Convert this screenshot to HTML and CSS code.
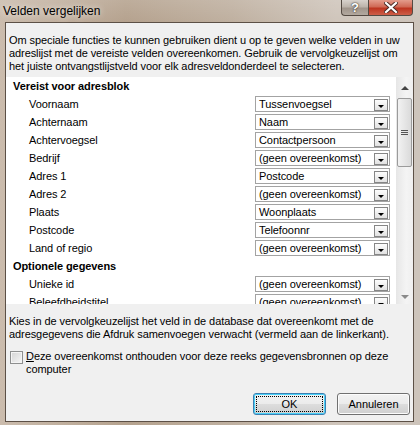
FILE: index.html
```html
<!DOCTYPE html>
<html lang="nl">
<head>
    <meta charset="UTF-8">
    <title>Velden vergelijken</title>
    <link rel="stylesheet" href="styles.css">
</head>
<body>
    <div class="window">
        <div class="titlebar">
            <span class="title">Velden vergelijken</span>
            <div class="caption-buttons">
                <span class="cap help">?</span>
                <span class="cap close">
                    <svg width="14" height="11" viewBox="0 0 14 11">
                        <path d="M2 1 L12 10 M12 1 L2 10" stroke="#4a2a24" stroke-width="4" stroke-linecap="square"/>
                        <path d="M2 1 L12 10 M12 1 L2 10" stroke="#fff" stroke-width="2.2" stroke-linecap="square"/>
                    </svg>
                </span>
            </div>
        </div>
        <div class="client">
            <p class="intro">Om speciale functies te kunnen gebruiken dient u op te geven welke velden in uw adreslijst met de vereiste velden overeenkomen. Gebruik de vervolgkeuzelijst om het juiste ontvangstlijstveld voor elk adresveldonderdeel te selecteren.</p>

            <div class="listbox">
                <div class="rows">
                    <div class="row head">Vereist voor adresblok</div>
                    <div class="row"><span class="label">Voornaam</span><div class="combo"><span class="value">Tussenvoegsel</span><span class="drop"></span></div></div>
                    <div class="row"><span class="label">Achternaam</span><div class="combo"><span class="value">Naam</span><span class="drop"></span></div></div>
                    <div class="row"><span class="label">Achtervoegsel</span><div class="combo"><span class="value">Contactpersoon</span><span class="drop"></span></div></div>
                    <div class="row"><span class="label">Bedrijf</span><div class="combo"><span class="value">(geen overeenkomst)</span><span class="drop"></span></div></div>
                    <div class="row"><span class="label">Adres 1</span><div class="combo"><span class="value">Postcode</span><span class="drop"></span></div></div>
                    <div class="row"><span class="label">Adres 2</span><div class="combo"><span class="value">(geen overeenkomst)</span><span class="drop"></span></div></div>
                    <div class="row"><span class="label">Plaats</span><div class="combo"><span class="value">Woonplaats</span><span class="drop"></span></div></div>
                    <div class="row"><span class="label">Postcode</span><div class="combo"><span class="value">Telefoonnr</span><span class="drop"></span></div></div>
                    <div class="row"><span class="label">Land of regio</span><div class="combo"><span class="value">(geen overeenkomst)</span><span class="drop"></span></div></div>
                    <div class="row head">Optionele gegevens</div>
                    <div class="row"><span class="label">Unieke id</span><div class="combo"><span class="value">(geen overeenkomst)</span><span class="drop"></span></div></div>
                    <div class="row"><span class="label">Beleefdheidstitel</span><div class="combo"><span class="value">(geen overeenkomst)</span><span class="drop"></span></div></div>
                </div>
                <div class="scrollbar">
                    <span class="arrow up"></span>
                    <span class="thumb"><span class="grip"></span></span>
                    <span class="arrow down"></span>
                </div>
            </div>

            <p class="hint">Kies in de vervolgkeuzelijst het veld in de database dat overeenkomt met de adresgegevens die Afdruk samenvoegen verwacht (vermeld aan de linkerkant).</p>

            <label class="remember">
                <span class="checkbox"></span>
                <span class="remember-text"><u>D</u>eze overeenkomst onthouden voor deze reeks gegevensbronnen op deze computer</span>
            </label>

            <div class="actions">
                <button class="btn default"><span class="focus">OK</span></button>
                <button class="btn">Annuleren</button>
            </div>
        </div>
    </div>
</body>
</html>
```

FILE: styles.css
```css
body {
    margin: 0;
    font-family: "Liberation Sans", Arial, sans-serif;
    font-size: 11px;
    letter-spacing: -0.08px;
    color: #000;
}
.window {
    width: 420px;
    height: 425px;
    overflow: hidden;
    background: linear-gradient(to right, #cbbcad 0%, #b5a28e 30%, #bfb0a0 55%, #cfc5bb 80%, #cdc4bb 100%);
}
.titlebar {
    height: 22px;
    display: flex;
    justify-content: space-between;
    background: linear-gradient(to bottom, rgba(255,255,255,0.12), rgba(255,255,255,0));
}
.title {
    font-size: 12px;
    letter-spacing: 0;
    padding: 4px 0 0 3px;
    text-shadow: 0 0 6px rgba(255,255,255,0.9);
}
.caption-buttons {
    display: flex;
    height: 16px;
    margin-right: 7px;
}
.cap {
    display: flex;
    align-items: center;
    justify-content: center;
    border: 1px solid #544a42;
    border-top: none;
}
.help {
    width: 26px;
    border-radius: 0 0 0 4px;
    border-right: none;
    background: linear-gradient(to bottom, #d8d2cc 0%, #bdb4ab 45%, #a0958b 55%, #b3a99f 100%);
    color: #fff;
    font-weight: bold;
    font-size: 13px;
    text-shadow: 0 0 2px #3a322c, 0 0 1px #3a322c;
}
.close {
    width: 43px;
    border-radius: 0 0 4px 0;
    background: linear-gradient(to bottom, #e39c8c 0%, #d06a56 45%, #bd3520 55%, #cd5e48 100%);
}
.client {
    margin: 0 6px 0 5px;
    height: 398px;
    border: 1px solid #5c5046;
    background: #f0f0f0;
}
.intro {
    margin: 0 0 4px;
    padding: 11px 4px 0 3px;
    line-height: 13px;
}
.listbox {
    height: 227px;
    display: flex;
    background: #fff;
    overflow: hidden;
}
.rows {
    flex: 1;
}
.row {
    height: 18px;
    display: grid;
    grid-template-columns: 226px 135px;
    align-items: center;
    padding-left: 23px;
}
.row.head {
    display: block;
    padding-left: 7px;
    line-height: 18px;
    font-weight: bold;
}
.combo {
    height: 14px;
    border: 1px solid #a3a3a3;
    display: flex;
    align-items: center;
    justify-content: space-between;
    padding-left: 3px;
}
.value {
    line-height: 14px;
}
.drop {
    width: 12px;
    height: 10px;
    margin: 2px 1px 0 0;
    align-self: flex-start;
    border: 1px solid #868686;
    background: linear-gradient(to bottom, #fdfdfd, #e2e2e2);
    position: relative;
}
.drop::after {
    content: "";
    position: absolute;
    left: 3px;
    bottom: 2px;
    border-left: 3px solid transparent;
    border-right: 3px solid transparent;
    border-top: 3px solid #000;
}
.scrollbar {
    width: 17px;
    display: flex;
    flex-direction: column;
    align-items: center;
    background: linear-gradient(to right, #e6e6e6, #f4f4f4 60%, #efefef);
}
.arrow {
    width: 0;
    height: 0;
    border-left: 4px solid transparent;
    border-right: 4px solid transparent;
}
.arrow.up {
    margin-top: 9px;
    border-bottom: 4px solid #444;
}
.arrow.down {
    margin-top: auto;
    margin-bottom: 5px;
    border-top: 4px solid #8a8a8a;
}
.thumb {
    width: 13px;
    height: 67px;
    margin-top: 8px;
    border: 1px solid #9b9b9b;
    border-radius: 2px;
    background: linear-gradient(to right, #f2f2f2, #e6e6e6 50%, #dadada);
    display: flex;
    align-items: center;
    justify-content: center;
}
.grip {
    width: 7px;
    height: 5px;
    background: linear-gradient(to bottom, #555 0 1px, transparent 1px 2px, #555 2px 3px, transparent 3px 4px, #555 4px 5px);
}
.hint {
    margin: 11px 0 0;
    padding: 0 4px 0 3px;
    line-height: 13px;
}
.remember {
    display: flex;
    align-items: flex-start;
    margin-top: 9px;
    padding-left: 4px;
    line-height: 13px;
}
.checkbox {
    width: 11px;
    height: 11px;
    margin: 1px 3px 0 0;
    flex: none;
    border: 1px solid #8e8f8f;
    background: linear-gradient(135deg, #d4d4d4, #f6f6f6);
    box-shadow: inset 0 0 0 1px #f4f4f4;
}
.actions {
    display: flex;
    justify-content: flex-end;
    gap: 11px;
    margin-top: 17px;
    padding-right: 3px;
}
.btn {
    width: 73px;
    height: 22px;
    margin: 0;
    padding: 0;
    font-family: inherit;
    font-size: 11px;
    color: #000;
    border: 1px solid #707070;
    border-radius: 3px;
    background: linear-gradient(to bottom, #f2f2f2 0%, #ebebeb 50%, #dddddd 51%, #cfcfcf 100%);
    box-shadow: inset 0 0 0 1px #fcfcfc;
}
.btn.default {
    border-color: #3c7fb1;
    box-shadow: inset 0 0 0 1px #48d0f8;
    padding: 2px;
}
.focus {
    display: flex;
    align-items: center;
    justify-content: center;
    height: 14px;
    border: 1px dotted #000;
}
```
